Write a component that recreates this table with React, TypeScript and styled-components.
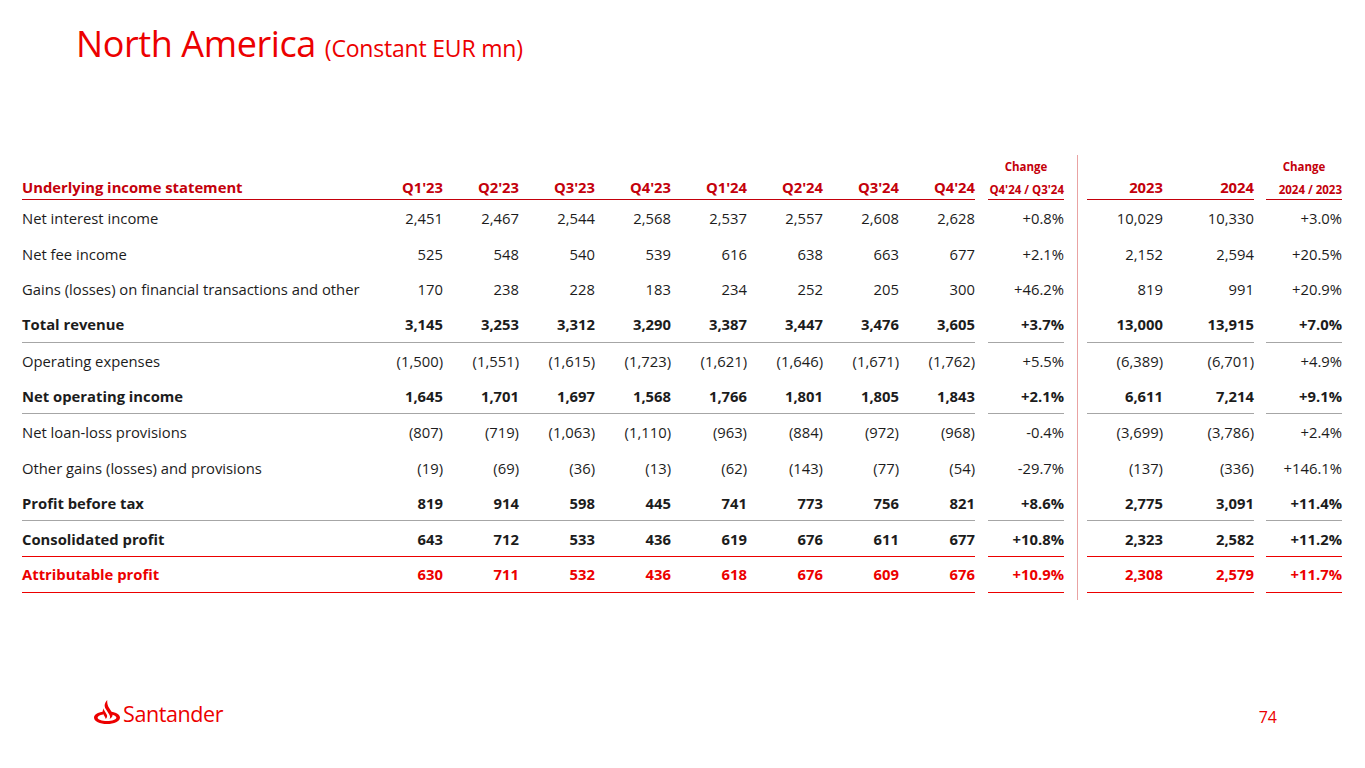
import styled, { createGlobalStyle } from "styled-components";

const GlobalStyle = createGlobalStyle`
  html, body {
    margin: 0;
    padding: 0;
    background: #ffffff;
  }
  body {
    font-family: "Open Sans", "Noto Sans", sans-serif;
    color: #1c1c1c;
  }
`;

type Line = "none" | "gray" | "red" | "head";

type Row = {
  label: string;
  q: string[];
  qChange: string;
  years: string[];
  yChange: string;
  bold?: boolean;
  red?: boolean;
  line?: Line;
};

const rows: Row[] = [
  {
    label: "Net interest income",
    q: ["2,451", "2,467", "2,544", "2,568", "2,537", "2,557", "2,608", "2,628"],
    qChange: "+0.8%",
    years: ["10,029", "10,330"],
    yChange: "+3.0%",
  },
  {
    label: "Net fee income",
    q: ["525", "548", "540", "539", "616", "638", "663", "677"],
    qChange: "+2.1%",
    years: ["2,152", "2,594"],
    yChange: "+20.5%",
  },
  {
    label: "Gains (losses) on financial transactions and other",
    q: ["170", "238", "228", "183", "234", "252", "205", "300"],
    qChange: "+46.2%",
    years: ["819", "991"],
    yChange: "+20.9%",
  },
  {
    label: "Total revenue",
    q: ["3,145", "3,253", "3,312", "3,290", "3,387", "3,447", "3,476", "3,605"],
    qChange: "+3.7%",
    years: ["13,000", "13,915"],
    yChange: "+7.0%",
    bold: true,
    line: "gray",
  },
  {
    label: "Operating expenses",
    q: ["(1,500)", "(1,551)", "(1,615)", "(1,723)", "(1,621)", "(1,646)", "(1,671)", "(1,762)"],
    qChange: "+5.5%",
    years: ["(6,389)", "(6,701)"],
    yChange: "+4.9%",
  },
  {
    label: "Net operating income",
    q: ["1,645", "1,701", "1,697", "1,568", "1,766", "1,801", "1,805", "1,843"],
    qChange: "+2.1%",
    years: ["6,611", "7,214"],
    yChange: "+9.1%",
    bold: true,
    line: "gray",
  },
  {
    label: "Net loan-loss provisions",
    q: ["(807)", "(719)", "(1,063)", "(1,110)", "(963)", "(884)", "(972)", "(968)"],
    qChange: "-0.4%",
    years: ["(3,699)", "(3,786)"],
    yChange: "+2.4%",
  },
  {
    label: "Other gains (losses) and provisions",
    q: ["(19)", "(69)", "(36)", "(13)", "(62)", "(143)", "(77)", "(54)"],
    qChange: "-29.7%",
    years: ["(137)", "(336)"],
    yChange: "+146.1%",
  },
  {
    label: "Profit before tax",
    q: ["819", "914", "598", "445", "741", "773", "756", "821"],
    qChange: "+8.6%",
    years: ["2,775", "3,091"],
    yChange: "+11.4%",
    bold: true,
    line: "gray",
  },
  {
    label: "Consolidated profit",
    q: ["643", "712", "533", "436", "619", "676", "611", "677"],
    qChange: "+10.8%",
    years: ["2,323", "2,582"],
    yChange: "+11.2%",
    bold: true,
    line: "red",
  },
  {
    label: "Attributable profit",
    q: ["630", "711", "532", "436", "618", "676", "609", "676"],
    qChange: "+10.9%",
    years: ["2,308", "2,579"],
    yChange: "+11.7%",
    bold: true,
    red: true,
    line: "red",
  },
];

const quarters = ["Q1'23", "Q2'23", "Q3'23", "Q4'23", "Q1'24", "Q2'24", "Q3'24", "Q4'24"];

const lineStyles: Record<Line, string> = {
  none: "none",
  gray: "1px solid #a6a6a6",
  red: "1.5px solid #ec0000",
  head: "1.5px solid #c4000b",
};

const Page = styled.div`
  width: 1365px;
  height: 768px;
  display: flex;
  flex-direction: column;
  overflow: hidden;
`;

const Title = styled.h1`
  margin: 0;
  padding: 21px 0 0 76px;
  font-size: 36px;
  line-height: 46px;
  font-weight: 400;
  color: #ec0000;
  letter-spacing: -0.4px;
`;

const Subtitle = styled.span`
  font-size: 23px;
  letter-spacing: -0.2px;
`;

const Table = styled.div`
  margin: 84px 0 0 22px;
  display: grid;
  grid-template-columns: 345px repeat(8, 76px) 13px 76px 23px 76px 91px 12px 76px;
  grid-template-rows: 23px 22px repeat(11, 35.7px) 7px;
  font-size: 14.8px;
`;

const Divider = styled.div`
  grid-column: 12;
  grid-row: 1 / -1;
  justify-self: start;
  margin-left: 13px;
  width: 1px;
  background: #e9a3a3;
`;

const Cell = styled.div<{ $bold?: boolean; $red?: boolean; $line: Line; $left?: boolean }>`
  display: flex;
  align-items: center;
  justify-content: ${({ $left }) => ($left ? "flex-start" : "flex-end")};
  white-space: nowrap;
  font-weight: ${({ $bold }) => ($bold ? 700 : 400)};
  color: ${({ $red }) => ($red ? "#ec0000" : "#1c1c1c")};
  border-bottom: ${({ $line }) => lineStyles[$line]};
  box-sizing: border-box;
`;

const HeadCell = styled.div<{ $small?: boolean; $left?: boolean; $line?: boolean }>`
  display: flex;
  align-items: flex-end;
  justify-content: ${({ $left }) => ($left ? "flex-start" : "flex-end")};
  padding-bottom: ${({ $line }) => ($line ? "2px" : "3px")};
  white-space: nowrap;
  font-weight: 700;
  font-size: ${({ $small }) => ($small ? "11.5px" : "14.8px")};
  color: #c4000b;
  border-bottom: ${({ $line }) => ($line ? lineStyles.head : "none")};
  box-sizing: border-box;
`;

const TopChange = styled(HeadCell)`
  justify-content: center;
  font-size: 11.5px;
  padding-bottom: 0;
  align-items: center;
`;

const Empty = styled.div``;

const Footer = styled.div`
  margin-top: auto;
  padding: 0 88px 40px 93px;
  display: flex;
  justify-content: space-between;
  align-items: flex-end;
`;

const Logo = styled.div`
  display: flex;
  align-items: flex-end;
  gap: 2px;
  margin-bottom: 3px;
  color: #ec0000;
  font-size: 21.5px;
  line-height: 22px;
  letter-spacing: -0.4px;
`;

const PageNumber = styled.div`
  color: #ec0000;
  font-size: 16px;
  line-height: 20px;
  padding-bottom: 1px;
`;

const Flame = () => (
  <svg width="28" height="25" viewBox="0 0 28 25">
    <path
      fill="#ec0000"
      d="M1 17.5C1 14.5 5 12.5 10 11.8v2.6C6.8 15 4.6 16.2 4.6 17.5c0 2 4.2 3.5 9.4 3.5s9.4-1.5 9.4-3.5c0-1.3-2.2-2.5-5.4-3.1v-2.6c5 .7 9 2.7 9 5.7 0 3.9-5.9 6.5-13 6.5S1 21.4 1 17.5Z"
    />
    <path
      fill="#ec0000"
      d="M14.2 0C11.2 3.8 11 6 12.8 9l3.6 5.8c0.9 1.6 0.9 3 0.2 4.2 2.8-1.4 3.8-3.8 2.4-6.4L15.4 6.7C14.5 5 14.1 2.6 14.2 0Z"
    />
    <path
      fill="#ec0000"
      d="M10.9 8.2c-1.6 2.4-1.7 4.2-0.6 6l1.8 3c0.4 0.7 0.5 1.3 0.5 1.9 1.6-1.4 2-3.1 1-4.8l-2.7-4.6Z"
    />
  </svg>
);

const App = () => {
  return (
    <Page>
      <GlobalStyle />
      <Title>
        North America <Subtitle>(Constant EUR mn)</Subtitle>
      </Title>

      <Table>
        <Divider />

        {/* header, line 1 */}
        <Empty />
        {quarters.map((q) => (
          <Empty key={`e-${q}`} />
        ))}
        <Empty />
        <TopChange>Change</TopChange>
        <Empty />
        <Empty />
        <Empty />
        <TopChange>Change</TopChange>

        {/* header, line 2 */}
        <HeadCell $left $line>
          Underlying income statement
        </HeadCell>
        {quarters.map((q) => (
          <HeadCell key={q} $line>
            {q}
          </HeadCell>
        ))}
        <Empty />
        <HeadCell $small $line>
          Q4'24 / Q3'24
        </HeadCell>
        <HeadCell $line>2023</HeadCell>
        <HeadCell $line>2024</HeadCell>
        <Empty />
        <HeadCell $small $line>
          2024 / 2023
        </HeadCell>

        {rows.map((r) => {
          const line = r.line ?? "none";
          const common = { $bold: r.bold, $red: r.red, $line: line };
          return [
            <Cell key={`${r.label}-l`} $left {...common}>
              {r.label}
            </Cell>,
            ...r.q.map((v, i) => (
              <Cell key={`${r.label}-q${i}`} {...common}>
                {v}
              </Cell>
            )),
            <Empty key={`${r.label}-g1`} />,
            <Cell key={`${r.label}-qc`} {...common}>
              {r.qChange}
            </Cell>,
            ...r.years.map((v, i) => (
              <Cell key={`${r.label}-y${i}`} {...common}>
                {v}
              </Cell>
            )),
            <Empty key={`${r.label}-g2`} />,
            <Cell key={`${r.label}-yc`} {...common}>
              {r.yChange}
            </Cell>,
          ];
        })}
      </Table>

      <Footer>
        <Logo>
          <Flame />
          <span>Santander</span>
        </Logo>
        <PageNumber>74</PageNumber>
      </Footer>
    </Page>
  );
};

export default App;
